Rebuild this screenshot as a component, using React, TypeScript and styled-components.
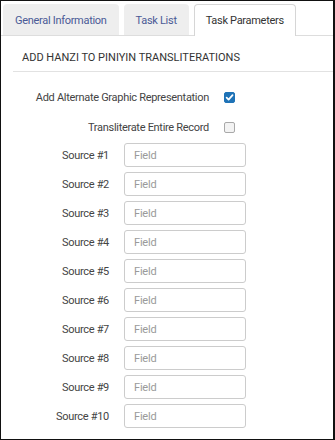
import React from 'react'
import styled, { createGlobalStyle } from 'styled-components'

const GlobalStyle = createGlobalStyle`
  html, body {
    margin: 0;
    padding: 0;
    background: #fff;
  }
  body {
    font-family: Roboto, "Liberation Sans", Arial, sans-serif;
  }
`

const Frame = styled.div`
  width: 335px;
  height: 440px;
  box-sizing: border-box;
  border: 1px solid #111;
  border-right-width: 2px;
  background: #fff;
  overflow: hidden;
`

const TabBar = styled.div`
  display: flex;
  align-items: flex-end;
  gap: 5px;
  padding: 3px 0 0 2px;
  height: 35px;
  box-sizing: border-box;
  border-bottom: 1px solid #ddd;
`

const Tab = styled.div<{ $active?: boolean }>`
  box-sizing: border-box;
  padding: 0 11px;
  display: flex;
  align-items: center;
  font-size: 11px;
  letter-spacing: -0.3px;
  border-radius: 4px 4px 0 0;
  background: ${p => (p.$active ? '#fff' : '#eeeeee')};
  color: ${p => (p.$active ? '#333' : '#4a5a96')};
  border: 1px solid ${p => (p.$active ? '#d6d6d6' : '#eeeeee')};
  border-bottom: none;
  margin-bottom: ${p => (p.$active ? '-1px' : '0')};
  height: ${p => (p.$active ? '32px' : '31px')};
`

const Section = styled.div`
  padding: 0 0 0 12px;
`

const Heading = styled.div`
  font-size: 11px;
  color: #333;
  padding: 15px 0 7px 9px;
  border-bottom: 1px solid #e2e2e2;
`

const Form = styled.div`
  display: flex;
  flex-direction: column;
  padding-top: 11px;
`

const CheckRow = styled.label`
  display: flex;
  align-items: center;
  height: 29.5px;
`

const Label = styled.span<{ $width: number }>`
  width: ${p => p.$width}px;
  text-align: right;
  font-size: 11px;
  letter-spacing: -0.3px;
  color: #444;
  flex-shrink: 0;
  white-space: nowrap;
`

const Box = styled.span<{ $checked?: boolean }>`
  margin-left: 15px;
  width: 11px;
  height: 11px;
  border-radius: 2px;
  box-sizing: border-box;
  display: flex;
  align-items: center;
  justify-content: center;
  background: ${p => (p.$checked ? '#1f73b7' : '#f3f3f3')};
  border: 1px solid ${p => (p.$checked ? '#1f73b7' : '#a9a9a9')};
`

const SourceList = styled.div`
  display: flex;
  flex-direction: column;
  gap: 5px;
  padding-top: 1px;
`

const SourceRow = styled.div`
  display: flex;
  align-items: center;
`

const Field = styled.input`
  margin-left: 15px;
  width: 122px;
  height: 24px;
  box-sizing: border-box;
  border: 1px solid #cccccc;
  border-radius: 3px;
  padding: 0 9px;
  font-family: inherit;
  font-size: 11px;
  letter-spacing: -0.2px;
  color: #333;
  outline: none;
  &::placeholder {
    color: #9a9a9a;
  }
`

const Check = () => (
  <svg width="9" height="9" viewBox="0 0 10 10">
    <path d="M1.8 5.2 L4 7.4 L8.4 2.4" fill="none" stroke="#fff" strokeWidth="1.9" strokeLinecap="round" strokeLinejoin="round" />
  </svg>
)

const tabs = ['General Information', 'Task List', 'Task Parameters']
const sources = Array.from({ length: 10 }, (_, i) => `Source #${i + 1}`)

const App = () => {
  return (
    <>
      <GlobalStyle />
      <Frame>
        <TabBar>
          {tabs.map(t => (
            <Tab key={t} $active={t === 'Task Parameters'}>{t}</Tab>
          ))}
        </TabBar>
        <Section>
          <Heading>ADD HANZI TO PINIYIN TRANSLITERATIONS</Heading>
          <Form>
            <CheckRow>
              <Label $width={196}>Add Alternate Graphic Representation</Label>
              <Box $checked><Check /></Box>
            </CheckRow>
            <CheckRow>
              <Label $width={196}>Transliterate Entire Record</Label>
              <Box />
            </CheckRow>
            <SourceList>
              {sources.map(s => (
                <SourceRow key={s}>
                  <Label $width={96}>{s}</Label>
                  <Field placeholder="Field" />
                </SourceRow>
              ))}
            </SourceList>
          </Form>
        </Section>
      </Frame>
    </>
  )
}

export default App
